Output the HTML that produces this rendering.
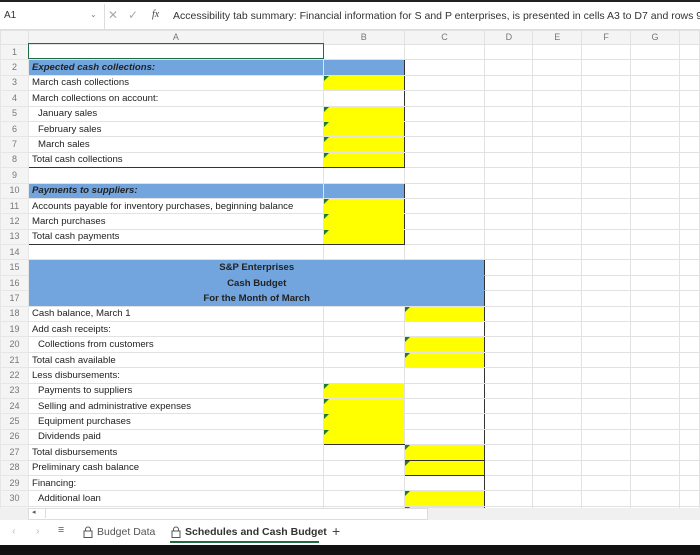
<!DOCTYPE html><html><head><style>
*{margin:0;padding:0;box-sizing:border-box}
body{width:700px;height:555px;overflow:hidden;background:#fff;font-family:"Liberation Sans",sans-serif;position:relative}
.fb{position:absolute;left:0;top:0;width:700px;height:30px;background:#fff;border-top:2px solid #222;border-bottom:1px solid #ddd}
.nb{position:absolute;left:0;top:2px;width:105px;height:26px;border-right:1px solid #ddd;font-size:10px;color:#333;padding:6px 0 0 4px}
.fb .t{position:absolute;left:173px;top:8px;font-size:10.5px;color:#333;white-space:nowrap}
table{position:absolute;left:0;top:30px;border-collapse:collapse;table-layout:fixed;font-size:9.6px;color:#222}
td{height:15.4px;border:1px solid #e2e2e2;padding:0 0 0 3px;white-space:nowrap;overflow:hidden;position:relative;line-height:13px}
tr.h td{height:13px;background:#f4f4f4;color:#777;text-align:center;font-size:9px;padding:0}
td.r{background:#f4f4f4;color:#777;font-size:9px;text-align:center;padding:0;border-color:#e6e6e6}
.bl{background:#72a5de}
.y{background:#ff0}
.m::before{content:"";position:absolute;left:0;top:0;border-top:5px solid #1f7a3a;border-right:5px solid transparent}
.i{padding-left:9px}
.c{text-align:center;font-weight:bold;padding:0}
.bt{border-top:1.5px solid #333}
.bb{border-bottom:1.5px solid #333}
.br{border-right:1.5px solid #333}
.bL{border-left:1.5px solid #333}
.tabs{position:absolute;left:0;top:520px;width:700px;height:25px;background:#fff;font-size:10.5px;color:#444}
.blk{position:absolute;left:0;top:545px;width:700px;height:10px;background:#111}
.sb{position:absolute;left:28px;top:508px;width:400px;height:12px;background:#fff;border:1px solid #ddd}
.sel{position:absolute;left:28px;top:43px;width:296px;height:16px;border:1.5px solid #1e6e42}
</style></head><body>
<div class="fb"><div class="nb">A1</div>
<span style="position:absolute;left:90px;top:8px;font-size:8px;color:#777">⌄</span>
<span style="position:absolute;left:108px;top:6px;font-size:12px;color:#aaa">✕</span>
<span style="position:absolute;left:128px;top:6px;font-size:12px;color:#aaa">✓</span>
<span style="position:absolute;left:152px;top:7px;font-size:10px;color:#444;font-style:italic;font-family:'Liberation Serif',serif">fx</span>
<span class="t">Accessibility tab summary: Financial information for S and P enterprises, is presented in cells A3 to D7 and rows 9 to</span></div>
<table>
<colgroup><col style="width:28px"><col style="width:295px"><col style="width:81px"><col style="width:81px"><col style="width:48px"><col style="width:49px"><col style="width:49px"><col style="width:49px"><col style="width:20px"></colgroup>
<tr class="h"><td></td><td>A</td><td>B</td><td>C</td><td>D</td><td>E</td><td>F</td><td>G</td><td></td></tr>
<tr><td class="r">1</td><td></td><td></td><td></td><td></td><td></td><td></td><td></td><td></td></tr>
<tr><td class="r">2</td><td class="bl bt bL" style="font-weight:bold;font-style:italic">Expected cash collections:</td><td class="bl bt br"></td><td></td><td></td><td></td><td></td><td></td><td></td></tr>
<tr><td class="r">3</td><td class="bL">March cash collections</td><td class="y m br"></td><td></td><td></td><td></td><td></td><td></td><td></td></tr>
<tr><td class="r">4</td><td class="bL">March collections on account:</td><td class="br"></td><td></td><td></td><td></td><td></td><td></td><td></td></tr>
<tr><td class="r">5</td><td class="i bL">January sales</td><td class="y m br"></td><td></td><td></td><td></td><td></td><td></td><td></td></tr>
<tr><td class="r">6</td><td class="i bL">February sales</td><td class="y m br"></td><td></td><td></td><td></td><td></td><td></td><td></td></tr>
<tr><td class="r">7</td><td class="i bL">March sales</td><td class="y m br"></td><td></td><td></td><td></td><td></td><td></td><td></td></tr>
<tr><td class="r">8</td><td class="bL bb">Total cash collections</td><td class="y m br bb bt"></td><td></td><td></td><td></td><td></td><td></td><td></td></tr>
<tr><td class="r">9</td><td></td><td></td><td></td><td></td><td></td><td></td><td></td><td></td></tr>
<tr><td class="r">10</td><td class="bl bt bL" style="font-weight:bold;font-style:italic">Payments to suppliers:</td><td class="bl bt br"></td><td></td><td></td><td></td><td></td><td></td><td></td></tr>
<tr><td class="r">11</td><td class="bL">Accounts payable for inventory purchases, beginning balance</td><td class="y m br"></td><td></td><td></td><td></td><td></td><td></td><td></td></tr>
<tr><td class="r">12</td><td class="bL">March purchases</td><td class="y m br"></td><td></td><td></td><td></td><td></td><td></td><td></td></tr>
<tr><td class="r">13</td><td class="bL bb">Total cash payments</td><td class="y m br bb bt"></td><td></td><td></td><td></td><td></td><td></td><td></td></tr>
<tr><td class="r">14</td><td></td><td></td><td></td><td></td><td></td><td></td><td></td><td></td></tr>
<tr><td class="r">15</td><td class="bl c bt bL br" colspan="3" style="border-bottom-color:#72a5de">S&amp;P Enterprises</td><td></td><td></td><td></td><td></td><td></td></tr>
<tr><td class="r">16</td><td class="bl c bL br" colspan="3" style="border-top-color:#72a5de;border-bottom-color:#72a5de">Cash Budget</td><td></td><td></td><td></td><td></td><td></td></tr>
<tr><td class="r">17</td><td class="bl c bL br" colspan="3" style="border-top-color:#72a5de">For the Month of March</td><td></td><td></td><td></td><td></td><td></td></tr>
<tr><td class="r">18</td><td class="bL">Cash balance, March 1</td><td></td><td class="y m br"></td><td></td><td></td><td></td><td></td><td></td></tr>
<tr><td class="r">19</td><td class="bL">Add cash receipts:</td><td></td><td class="br"></td><td></td><td></td><td></td><td></td><td></td></tr>
<tr><td class="r">20</td><td class="i bL">Collections from customers</td><td></td><td class="y m br"></td><td></td><td></td><td></td><td></td><td></td></tr>
<tr><td class="r">21</td><td class="bL">Total cash available</td><td></td><td class="y m br bt"></td><td></td><td></td><td></td><td></td><td></td></tr>
<tr><td class="r">22</td><td class="bL">Less disbursements:</td><td></td><td class="br"></td><td></td><td></td><td></td><td></td><td></td></tr>
<tr><td class="r">23</td><td class="i bL">Payments to suppliers</td><td class="y m"></td><td class="br"></td><td></td><td></td><td></td><td></td><td></td></tr>
<tr><td class="r">24</td><td class="i bL">Selling and administrative expenses</td><td class="y m"></td><td class="br"></td><td></td><td></td><td></td><td></td><td></td></tr>
<tr><td class="r">25</td><td class="i bL">Equipment purchases</td><td class="y m"></td><td class="br"></td><td></td><td></td><td></td><td></td><td></td></tr>
<tr><td class="r">26</td><td class="i bL">Dividends paid</td><td class="y m bb"></td><td class="br"></td><td></td><td></td><td></td><td></td><td></td></tr>
<tr><td class="r">27</td><td class="bL">Total disbursements</td><td></td><td class="y m br bb"></td><td></td><td></td><td></td><td></td><td></td></tr>
<tr><td class="r">28</td><td class="bL">Preliminary cash balance</td><td></td><td class="y m br bb"></td><td></td><td></td><td></td><td></td><td></td></tr>
<tr><td class="r">29</td><td class="bL">Financing:</td><td></td><td class="br"></td><td></td><td></td><td></td><td></td><td></td></tr>
<tr><td class="r">30</td><td class="i bL">Additional loan</td><td></td><td class="y m br"></td><td></td><td></td><td></td><td></td><td></td></tr>
<tr><td class="r">31</td><td class="bL"></td><td></td><td class="y m br"></td><td></td><td></td><td></td><td></td><td></td></tr>
</table>
<div class="sel"></div>
<div style="position:absolute;left:0;top:508px;width:700px;height:12px;background:#f0f0f0"></div>
<div class="sb"><span style="position:absolute;left:3px;top:-1px;width:14px;height:10px;border-right:1px solid #ddd;font-size:7px;color:#555">◂</span></div>
<div class="tabs">
<span style="position:absolute;left:12px;top:5px;color:#bbb">‹</span>
<span style="position:absolute;left:36px;top:5px;color:#bbb">›</span>
<span style="position:absolute;left:58px;top:4px;color:#555">≡</span>
<svg style="position:absolute;left:83px;top:6px" width="10" height="12" viewBox="0 0 10 12"><path d="M2.5 5V3.5a2.5 2.5 0 0 1 5 0V5" fill="none" stroke="#555"/><rect x="1" y="5" width="8" height="6.5" fill="none" stroke="#555"/></svg>
<span style="position:absolute;left:97px;top:6px;color:#555">Budget Data</span>
<svg style="position:absolute;left:171px;top:6px" width="10" height="12" viewBox="0 0 10 12"><path d="M2.5 5V3.5a2.5 2.5 0 0 1 5 0V5" fill="none" stroke="#555"/><rect x="1" y="5" width="8" height="6.5" fill="none" stroke="#555"/></svg>
<span style="position:absolute;left:185px;top:6px;color:#333;font-weight:bold">Schedules and Cash Budget</span>
<span style="position:absolute;left:170px;top:21px;width:149px;height:2px;background:#1e6e42"></span>
<span style="position:absolute;left:332px;top:3px;font-size:14px;color:#444">+</span>
</div>
<div class="blk"></div>
</body></html>
